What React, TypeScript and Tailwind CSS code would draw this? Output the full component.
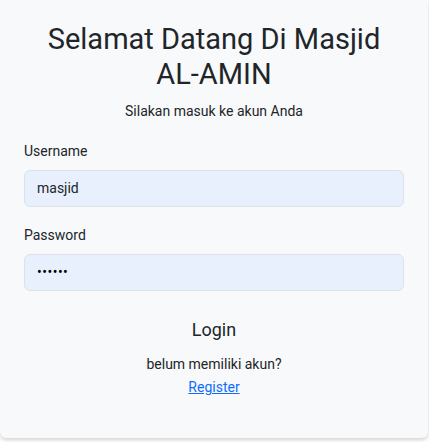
import React from "react";

export default function App() {
  return (
    <div className="w-[429px] h-[442px] bg-white" style={{ fontFamily: "Roboto, sans-serif" }}>
      <div className="w-[428px] h-[438px] bg-[#f8f9fa] rounded-b-md shadow-[0_2px_4px_rgba(0,0,0,0.18)] px-6 pt-[22px] text-[#212529] flex flex-col">
        <h1 className="text-center text-[29px] leading-[1.2] font-normal">
          Selamat Datang Di Masjid
          <br />
          AL-AMIN
        </h1>
        <p className="mt-[9px] text-center text-[14px] leading-[21px]">Silakan masuk ke akun Anda</p>

        <label className="mt-[19px] text-[14px] leading-[21px]">Username</label>
        <div className="mt-2 h-[37px] w-full rounded-md border border-[#dee2e6] bg-[#e8f0fe] px-3 flex items-center text-[14px]">
          masjid
        </div>

        <label className="mt-[18px] text-[14px] leading-[21px]">Password</label>
        <div className="mt-2 h-[37px] w-full rounded-md border border-[#dee2e6] bg-[#e8f0fe] px-3 flex items-center text-[14px] text-black">
          <span className="tracking-[0.5px]">••••••</span>
        </div>

        <div className="mt-[25px] text-center text-[18px] leading-[27px]">Login</div>
        <p className="mt-[11px] text-center text-[14px] leading-[21px]">belum memiliki akun?</p>
        <div className="mt-[2px] text-center text-[14px] leading-[21px]">
          <a href="#" className="text-[#0d6efd] underline">Register</a>
        </div>
      </div>
    </div>
  );
}
